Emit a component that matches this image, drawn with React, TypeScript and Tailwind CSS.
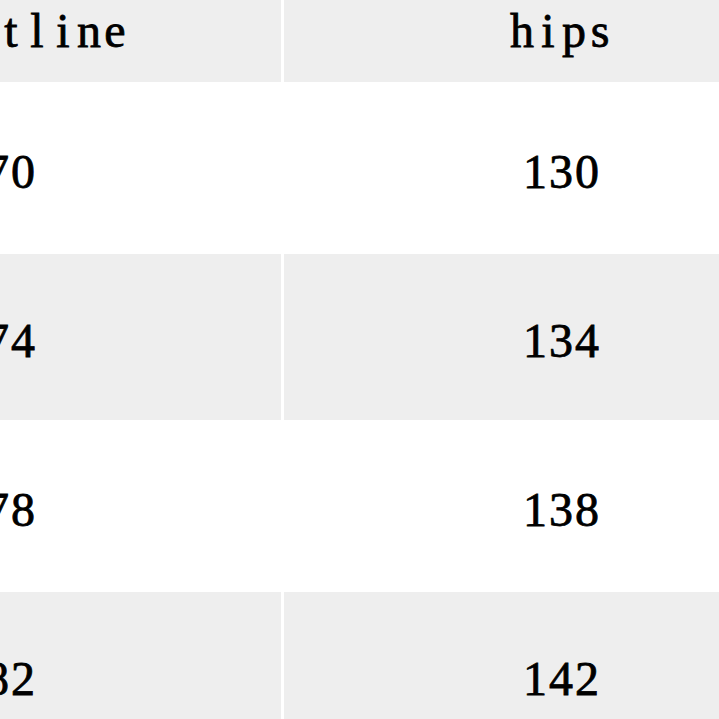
const rows = [
  { waist: '170', hips: '130' },
  { waist: '174', hips: '134' },
  { waist: '178', hips: '138' },
  { waist: '182', hips: '142' },
];

// SimSun-like monospaced look: every glyph sits in a 26px cell
function Mono({ text }: { text: string }) {
  return (
    <span className="inline-flex">
      {text.split('').map((ch, i) => (
        <span key={i} className="inline-block w-[26px] text-center">
          {ch}
        </span>
      ))}
    </span>
  );
}

export default function App() {
  return (
    <div className="w-[719px] h-[719px] overflow-hidden bg-white">
      <div
        className="grid grid-cols-[568px_554px] gap-[3px] ml-[-287px] mt-[-20px] text-[48px] leading-[48px] text-black [-webkit-text-stroke:0.8px_black]"
        style={{ fontFamily: '"Liberation Serif", "Noto Sans CJK SC", serif' }}
      >
        <div className="h-[102px] bg-[#eeeeee] flex items-center justify-center pl-[28px]">
          <Mono text="waistline" />
        </div>
        <div className="h-[102px] bg-[#eeeeee] flex items-center justify-center">
          <Mono text="hips" />
        </div>

        {rows.map((r, i) => (
          <div key={r.waist} className="contents">
            <div className={`h-[166px] flex items-center justify-center pt-[8px] ${i % 2 === 1 ? 'bg-[#eeeeee]' : 'bg-white'}`}>
              <Mono text={r.waist} />
            </div>
            <div className={`h-[166px] flex items-center justify-center pt-[8px] ${i % 2 === 1 ? 'bg-[#eeeeee]' : 'bg-white'}`}>
              <Mono text={r.hips} />
            </div>
          </div>
        ))}
      </div>
    </div>
  );
}
